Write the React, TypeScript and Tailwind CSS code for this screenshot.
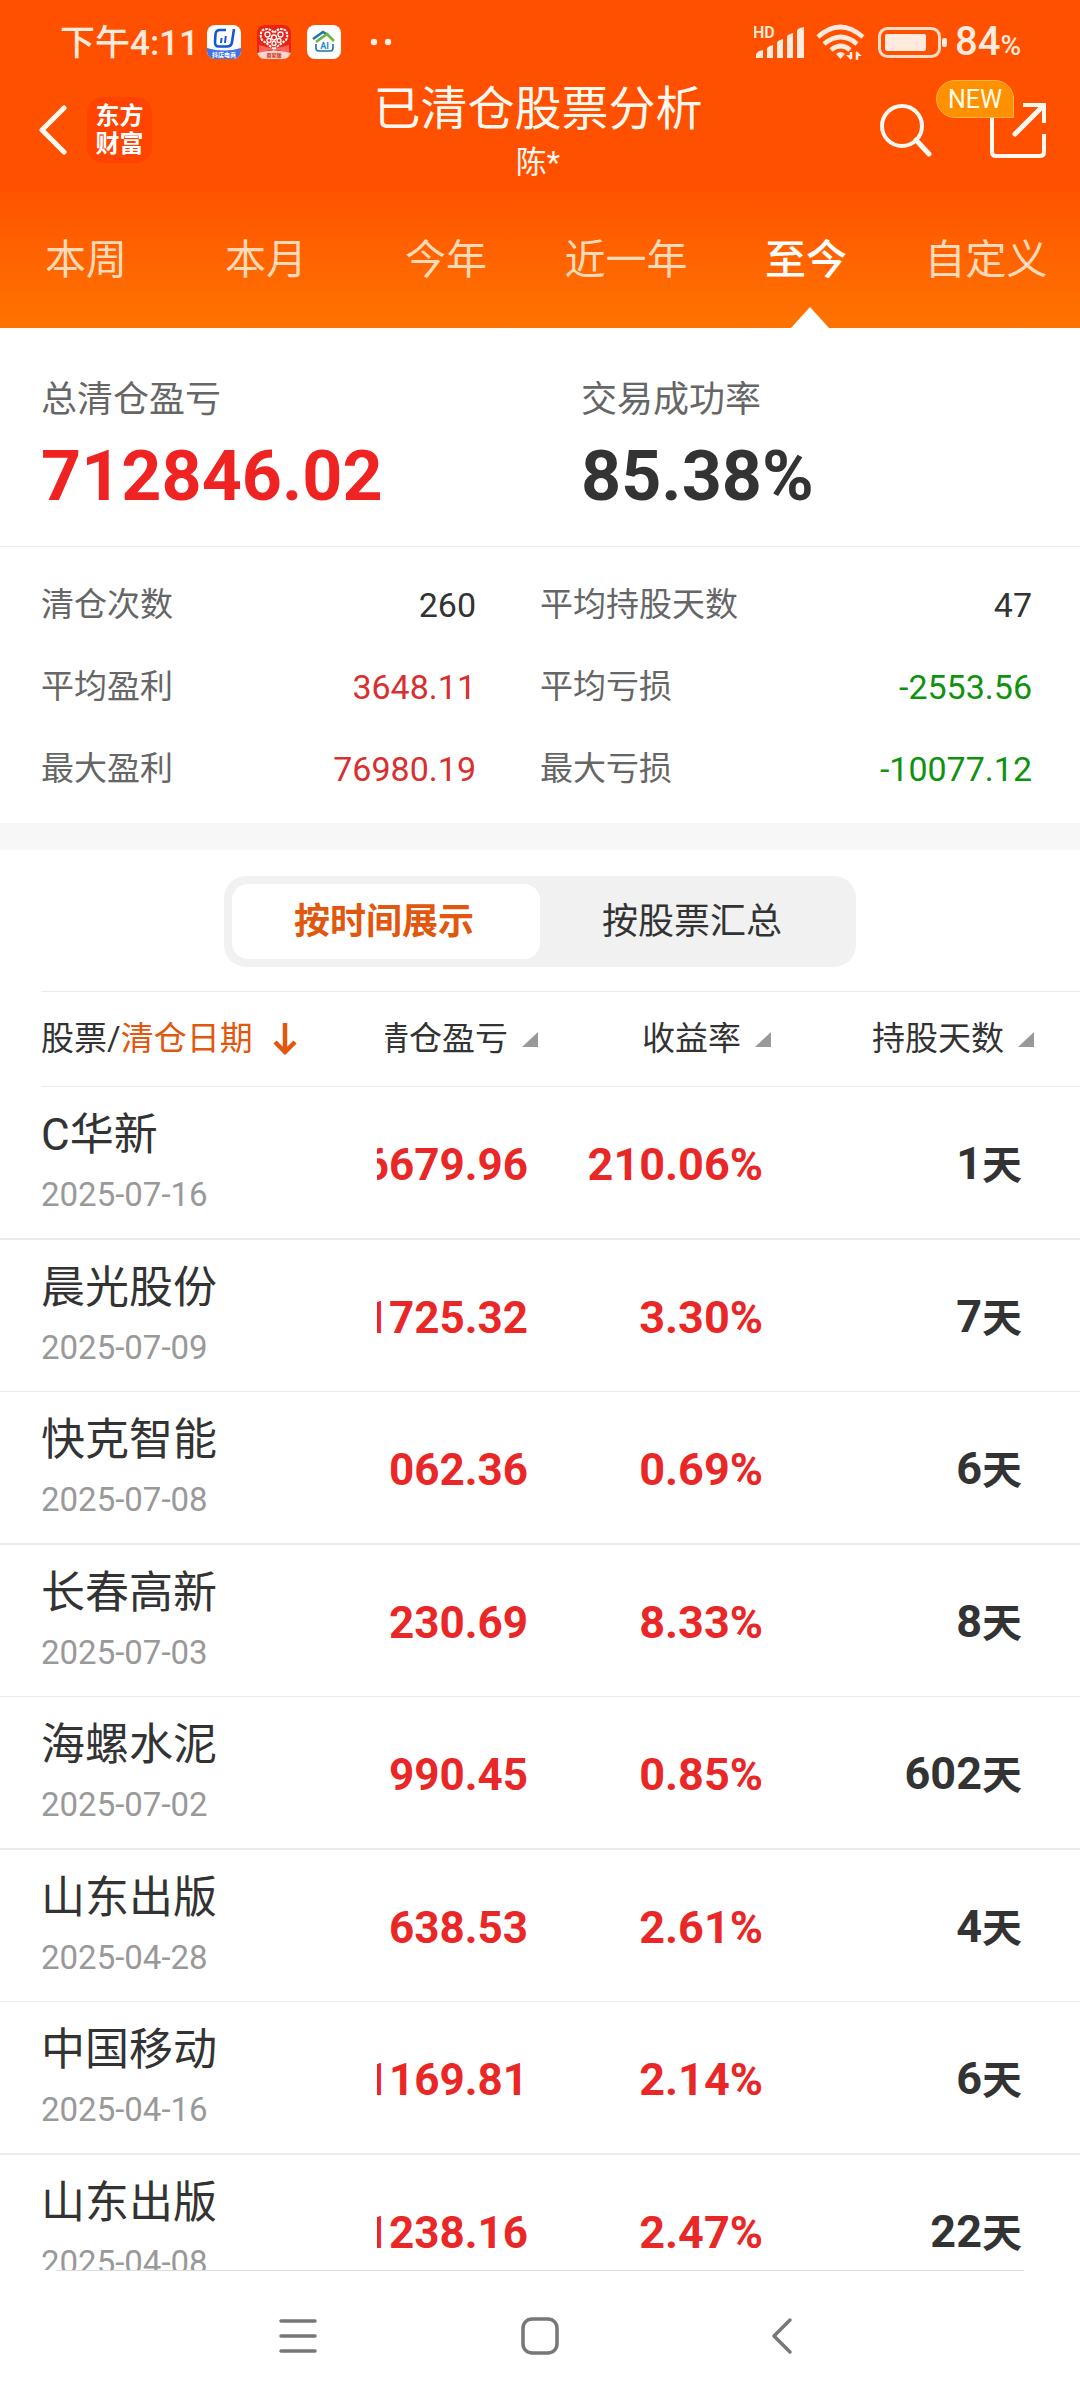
import { useState } from 'react';

type Trade = {
  name: string;
  date: string;
  profit: string;
  rate: string;
  days: number;
};

const ranges = ['本周', '本月', '今年', '近一年', '至今', '自定义'];

const stats = [
  { label: '清仓次数', value: '260', color: 'text-[#333333]' },
  { label: '平均持股天数', value: '47', color: 'text-[#333333]' },
  { label: '平均盈利', value: '3648.11', color: 'text-[#d82f2f]' },
  { label: '平均亏损', value: '-2553.56', color: 'text-[#0f930f]' },
  { label: '最大盈利', value: '76980.19', color: 'text-[#d82f2f]' },
  { label: '最大亏损', value: '-10077.12', color: 'text-[#0f930f]' },
];

const trades: Trade[] = [
  { name: 'C华新', date: '2025-07-16', profit: '6679.96', rate: '210.06%', days: 1 },
  { name: '晨光股份', date: '2025-07-09', profit: '1725.32', rate: '3.30%', days: 7 },
  { name: '快克智能', date: '2025-07-08', profit: '062.36', rate: '0.69%', days: 6 },
  { name: '长春高新', date: '2025-07-03', profit: '230.69', rate: '8.33%', days: 8 },
  { name: '海螺水泥', date: '2025-07-02', profit: '990.45', rate: '0.85%', days: 602 },
  { name: '山东出版', date: '2025-04-28', profit: '638.53', rate: '2.61%', days: 4 },
  { name: '中国移动', date: '2025-04-16', profit: '1169.81', rate: '2.14%', days: 6 },
  { name: '山东出版', date: '2025-04-08', profit: '1238.16', rate: '2.47%', days: 22 },
];

const AppBadges = () => (
  <div className="flex items-center gap-4">
    <svg width="34" height="34" viewBox="0 0 34 34">
      <defs>
        <clipPath id="shop">
          <rect width="34" height="34" rx="8" />
        </clipPath>
      </defs>
      <g clipPath="url(#shop)">
        <rect width="34" height="34" fill="#fff" />
        <path d="M0 23q17 5 34 0v11H0z" fill="#3f73e6" />
        <path
          d="M19 5h-6q-4 0-4.500 4L8 17q-.3 4.500 4 4.500h8q4.500 0 5-4.500L27 4"
          fill="none"
          stroke="#1556d6"
          strokeWidth="2.600"
        />
        <path d="M14 18l.6-5M18 18l.8-7" stroke="#1556d6" strokeWidth="2" />
      </g>
      <text x="17" y="32" fontSize="6" fontWeight="700" textAnchor="middle" fill="#fff">
        抖店电商
      </text>
    </svg>
    <svg width="34" height="34" viewBox="0 0 34 34">
      <defs>
        <clipPath id="heart">
          <rect width="34" height="34" rx="8" />
        </clipPath>
      </defs>
      <g clipPath="url(#heart)">
        <rect width="34" height="34" fill="#ea2314" />
        <path d="M17 24L0 34h34zM17 24L2 20v8zM17 24l15-4v8z" fill="#f8665a" />
        <path d="M0 28q17-5 34 0v6H0z" fill="#fcd5cd" />
        <path
          d="M17 24L5 15Q2 9 6 5q6-3 11 3 5-6 11-3 4 4 1 10z"
          fill="none"
          stroke="#fff"
          strokeWidth="2"
          strokeDasharray="2.500 1"
        />
        <g fill="none" stroke="#fff" strokeWidth="1.300">
          <circle cx="10.500" cy="9.500" r="2.500" />
          <circle cx="23.500" cy="9.500" r="2.500" />
          <circle cx="17" cy="12.500" r="2.500" />
          <circle cx="12" cy="15.500" r="2" />
          <circle cx="22" cy="15.500" r="2" />
          <circle cx="17" cy="18.500" r="2" />
        </g>
      </g>
      <text x="17" y="32" fontSize="5" fontWeight="700" textAnchor="middle" fill="#c92a1c">
        商家版
      </text>
    </svg>
    <svg width="34" height="34" viewBox="0 0 34 34">
      <rect width="34" height="34" rx="8" fill="#fff" />
      <path d="M6 14L16 7l5 3" fill="none" stroke="#1d74ad" strokeWidth="2.400" />
      <path d="M9 17l11-8 7 7" fill="none" stroke="#6db33f" strokeWidth="2.600" />
      <path d="M9 19v4q0 3 3 3h11q3 0 3-3v-4" fill="none" stroke="#1d74ad" strokeWidth="1.600" />
      <text x="17.500" y="24" fontSize="9" fontWeight="700" textAnchor="middle" fill="#1d8ec4">
        AI
      </text>
    </svg>
    <svg width="54" height="34" viewBox="0 0 54 34" fill="#ffeadd">
      <circle cx="17" cy="17" r="3.200" />
      <circle cx="31" cy="17" r="3.200" />
    </svg>
  </div>
);

const SignalIcons = () => (
  <svg width="193" height="36" viewBox="0 0 193 36" fill="#ffeadd">
    <text x="-1" y="14" fontSize="16" fontWeight="600">
      HD
    </text>
    <path d="M2 34v-3q0-2 3-4l4-1v8zM13 34v-9q0-2 3-3l3-1v13zM23 34V19q0-2 3-3l3-1v19zM33 34V13q0-2 3-3l3-1v25zM43 34V7q0-2 3-3l4-1v31z" />
    <g fill="none" stroke="#ffeadd" strokeWidth="4.600">
      <path d="M64 13q22-20 45 0" />
      <path d="M70 20q17-14 33 0" />
      <path d="M77 26q10-8 19 0" />
    </g>
    <path d="M82 30q4.500-4 9 0l-4.500 5z" />
    <path d="M97 28v7M103 36v-8" stroke="#ffeadd" strokeWidth="2.500" />
    <path d="M92 31h5v5zM102 27l6 5h-6z" />
    <rect x="125.500" y="4.500" width="60" height="28" rx="8" fill="none" stroke="#ffdcc5" strokeWidth="3" />
    <rect x="131" y="10" width="41" height="17" rx="2" />
    <rect x="188" y="14" width="5" height="9" rx="2" />
  </svg>
);

const SortMark = () => (
  <svg className="shrink-0" width="16" height="15" viewBox="0 0 16 15">
    <path d="M16 0v15H0z" fill="#999999" />
  </svg>
);

const StatusBar = () => (
  <div className="flex h-20 items-center justify-between pt-1 pr-[59px] pl-[60px] text-[#ffeadd]">
    <div className="flex items-center gap-2">
      <span className="pt-1 text-[35px] leading-10 font-medium">下午4:11</span>
      <AppBadges />
    </div>
    <div className="flex items-center gap-2">
      <SignalIcons />
      <span className="pt-1 text-[40px] leading-10 font-medium">
        84<span className="text-[28px]">%</span>
      </span>
    </div>
  </div>
);

const TitleBar = () => (
  <div className="grid h-[104px] grid-cols-[1fr_auto_1fr] items-center">
    <div className="flex items-center gap-5 pb-1 pl-[38px]">
      <button type="button" aria-label="返回">
        <svg width="29" height="50" viewBox="0 0 29 50" fill="none" stroke="#fff8f0" strokeWidth="5">
          <path d="M26 3L4 25l22 22" strokeLinecap="round" strokeLinejoin="round" />
        </svg>
      </button>
      <a
        href="#"
        className="flex h-[66px] w-[65px] flex-col items-center justify-center rounded-2xl bg-[#ff4300] text-[24px] leading-7 font-bold text-white"
      >
        <span>东方</span>
        <span>财富</span>
      </a>
    </div>
    <div className="pr-1 text-center text-[#fff8f0]">
      <h1 className="text-[47px] leading-[58px]">已清仓股票分析</h1>
      <p className="pt-1 text-[31px] leading-[42px]">陈*</p>
    </div>
    <div className="flex items-center justify-end gap-[58px] pr-[34px] pb-1">
      <button type="button" aria-label="搜索">
        <svg width="52" height="54" viewBox="0 0 52 54" fill="none" stroke="#fff8f0" strokeWidth="4">
          <circle cx="22" cy="23" r="20" />
          <path d="M36 37l13 14" strokeWidth="5" strokeLinecap="round" />
        </svg>
      </button>
      <button type="button" aria-label="分享" className="relative">
        <svg width="56" height="56" viewBox="0 0 56 56" fill="none" stroke="#fff8f0" strokeWidth="4">
          <path d="M2 10v40q0 4 4 4h44q4 0 4-4V32" />
          <path d="M33 3h21v18" />
          <path d="M53 4L25 32" strokeWidth="5" strokeLinecap="round" />
        </svg>
        <span className="absolute -top-[22px] right-8 h-[38px] w-[78px] rounded-full rounded-br-none border border-[#ffb347] bg-[#ff9100] text-center text-[25px] leading-[38px] text-[#fffbe8]">
          NEW
        </span>
      </button>
    </div>
  </div>
);

const RangeTabs = () => {
  const [active, setActive] = useState('至今');

  return (
    <nav className="grid h-36 grid-cols-6">
      {ranges.map((range) => (
        <button
          key={range}
          type="button"
          onClick={() => setActive(range)}
          className={`relative pt-2 pr-2 text-[41px] leading-[56px] whitespace-nowrap ${
            range === active ? 'font-medium text-white' : 'text-[#ffd9b8]'
          }`}
        >
          {range}
          {range === active ? (
            <svg
              className="absolute bottom-0 left-1/2 -translate-x-1/2"
              width="38"
              height="21"
              viewBox="0 0 38 21"
            >
              <path d="M19 0l19 21H0z" fill="#ffffff" />
            </svg>
          ) : null}
        </button>
      ))}
    </nav>
  );
};

const Summary = () => (
  <>
    <dl className="grid grid-cols-2 border-b border-[#ebebeb] pt-12 pb-[30px]">
      <div className="pl-[41px]">
        <dt className="text-[36px] leading-[48px] text-[#666666]">总清仓盈亏</dt>
        <dd className="mt-3 text-[70px] leading-[80px] font-bold text-[#f02323]">712846.02</dd>
      </div>
      <div className="pl-[41px]">
        <dt className="text-[36px] leading-[48px] text-[#666666]">交易成功率</dt>
        <dd className="mt-3 text-[70px] leading-[80px] font-bold text-[#333333]">85.38%</dd>
      </div>
    </dl>
    <dl className="grid grid-cols-2 pt-[17px] pb-[13px]">
      {stats.map(({ label, value, color }) => (
        <div
          key={label}
          className="flex h-[82px] items-center justify-between odd:pr-16 odd:pl-[41px] even:pr-12"
        >
          <dt className="text-[33px] text-[#666666]">{label}</dt>
          <dd className={`text-[34px] ${color}`}>{value}</dd>
        </div>
      ))}
    </dl>
  </>
);

const ViewSwitch = () => {
  const [byTime, setByTime] = useState(true);
  const on = 'bg-white font-bold text-[#e2570e]';
  const off = 'text-[#333333]';

  return (
    <div className="flex justify-center pt-[26px] pb-6">
      <div className="grid h-[91px] w-[632px] max-w-full grid-cols-2 rounded-[22px] bg-[#f1f1f1] p-2 text-[36px]">
        <button
          type="button"
          onClick={() => setByTime(true)}
          className={`rounded-2xl pr-1 ${byTime ? on : off}`}
        >
          按时间展示
        </button>
        <button
          type="button"
          onClick={() => setByTime(false)}
          className={`rounded-2xl pr-1 ${byTime ? off : on}`}
        >
          按股票汇总
        </button>
      </div>
    </div>
  );
};

const TradeTable = () => (
  <table className="w-full table-fixed border-separate border-spacing-0 text-[#333333]">
    <thead className="text-[33px]">
      <tr>
        <th className="w-[385px] p-0 pl-[41px] font-normal">
          <button
            type="button"
            className="flex h-24 w-full items-center border-y border-[#ebebeb]"
          >
            股票/<span className="text-[#e2570e]">清仓日期</span>
            <svg
              className="ml-5"
              width="24"
              height="32"
              viewBox="0 0 24 32"
              fill="none"
              stroke="#e2570e"
              strokeWidth="4.500"
            >
              <path d="M12 0v28M2 19l10 10 10-10" />
            </svg>
          </button>
        </th>
        <th className="w-[153px] p-0 font-normal">
          <button
            type="button"
            className="flex h-24 w-full items-center justify-end gap-[14px] overflow-hidden border-y border-[#ebebeb] whitespace-nowrap"
          >
            清仓盈亏
            <SortMark />
          </button>
        </th>
        <th className="w-[233px] p-0 font-normal">
          <button
            type="button"
            className="flex h-24 w-full items-center justify-end gap-[14px] border-y border-[#ebebeb]"
          >
            收益率
            <SortMark />
          </button>
        </th>
        <th className="p-0 font-normal">
          <button
            type="button"
            className="flex h-24 w-full items-center justify-end gap-[14px] border-y border-[#ebebeb] pr-[46px]"
          >
            持股天数
            <SortMark />
          </button>
        </th>
      </tr>
    </thead>
    <tbody className="text-right text-[45px] leading-[60px] font-bold">
      {trades.map(({ name, date, profit, rate, days }) => (
        <tr
          key={name + date}
          className="odd:h-[153px] even:h-[152px] odd:*:border-b-2 even:*:border-b *:border-[#ebebeb]"
        >
          <td className="p-0 pt-1 pl-[41px] text-left font-normal">
            <div className="text-[44px] leading-[60px]">{name}</div>
            <div className="text-[33px] leading-[60px] text-[#999999]">{date}</div>
          </td>
          <td className="p-0 pt-1 pr-[10px] text-[44px] text-[#e92727]">
            {/* long amounts keep their decimals and lose the leading digits */}
            <div className="-ml-2 flex justify-end overflow-hidden">{profit}</div>
          </td>
          <td className="p-0 pt-1 pr-2 text-[#e92727]">{rate}</td>
          <td className="p-0 pt-1 pr-[58px]">
            {days}
            <span className="text-[40px]">天</span>
          </td>
        </tr>
      ))}
    </tbody>
  </table>
);

const SystemNav = () => (
  <footer className="shrink-0">
    <div className="mx-14 border-t border-[#dedede]" />
    <div className="flex h-[129px] items-center justify-center gap-[202px]">
      <button type="button" aria-label="菜单">
        <svg width="40" height="40" viewBox="0 0 40 40" stroke="#777777" strokeWidth="3.500">
          <path d="M3 5h34M3 20h34M3 35h34" strokeLinecap="round" />
        </svg>
      </button>
      <button type="button" aria-label="主页">
        <svg width="40" height="40" viewBox="0 0 40 40" fill="none" stroke="#777777" strokeWidth="3.500">
          <rect x="3" y="3" width="34" height="34" rx="9" />
        </svg>
      </button>
      <button type="button" aria-label="后退">
        <svg width="40" height="40" viewBox="0 0 40 40" fill="none" stroke="#777777" strokeWidth="3.500">
          <path d="M28 4L12 20l16 16" strokeLinecap="round" strokeLinejoin="round" />
        </svg>
      </button>
    </div>
  </footer>
);

export default function App() {
  return (
    <div className="flex h-screen flex-col bg-white font-['Roboto','Noto_Sans_CJK_SC',sans-serif]">
      <header className="shrink-0 bg-linear-to-b from-[#ff5000] from-55% to-[#ff7300]">
        <StatusBar />
        <TitleBar />
        <RangeTabs />
      </header>
      <main className="min-h-0 flex-1 overflow-hidden">
        <Summary />
        <div className="h-[27px] bg-[#f7f7f7]" />
        <ViewSwitch />
        <TradeTable />
      </main>
      <SystemNav />
    </div>
  );
}
